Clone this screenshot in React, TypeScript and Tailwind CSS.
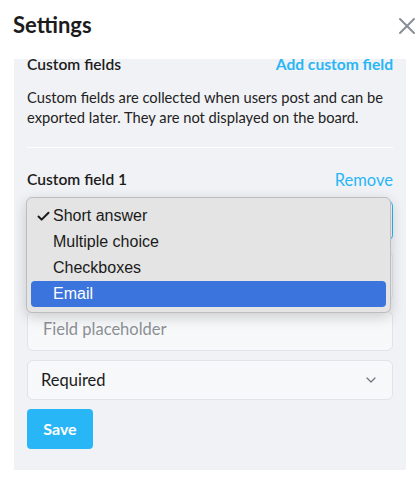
import { Check, ChevronDown, X } from 'lucide-react'

const options = ['Short answer', 'Multiple choice', 'Checkboxes', 'Email']

export default function App() {
  const selected = 'Short answer'
  const highlighted = 'Email'

  return (
    <div className="w-[420px] h-[481px] bg-white font-['Lato',sans-serif] text-[#1c1c1c]">
      {/* Header */}
      <div className="flex justify-between items-start pl-[13px] pt-[11px] h-[59px]">
        <h1 className="text-[22px] leading-[28px] font-bold">Settings</h1>
        <button className="mt-[1px] mr-[-1px] text-[#8a8f97]">
          <X size={28} strokeWidth={1.7} />
        </button>
      </div>

      {/* Scrolled panel */}
      <div className="mx-[14px] h-[411px] bg-[#f1f2f6] overflow-hidden px-[13px]">
        <div className="flex justify-between items-center mt-[-4px] h-[20px] text-[15.6px]">
          <span className="font-semibold">Custom fields</span>
          <button className="font-bold text-[#29b6f6]">Add custom field</button>
        </div>
        <p className="mt-[12px] text-[14.7px] leading-[20px] text-[#222]">
          Custom fields are collected when users post and can be exported later. They are not
          displayed on the board.
        </p>
        <div className="mt-[20px] h-px bg-white" />

        <div className="flex justify-between items-center mt-[22px] h-[20px] text-[15.6px]">
          <span className="font-semibold">Custom field 1</span>
          <button className="text-[16.5px] text-[#29b6f6]">Remove</button>
        </div>

        <div className="relative mt-[10px] flex flex-col gap-[10px]">
          <div className="h-[41px] rounded-[6px] border border-[#29b6f6] bg-[#f7f8fa] px-[14px] flex items-center text-[16.5px]">
            Short answer
          </div>
          <div className="h-[50px] rounded-[6px] border border-[#e1e3e8] bg-[#f7f8fa]" />
          <div className="h-[40px] rounded-[6px] border border-[#e1e3e8] bg-[#f7f8fa] px-[15px] pb-[3px] flex items-center text-[16.5px] text-[#8c8f94]">
            Field placeholder
          </div>
          <div className="-mt-px h-[40px] rounded-[6px] border border-[#e1e3e8] bg-[#f7f8fa] pl-[13px] pr-[13px] flex items-center justify-between text-[16.5px]">
            <span>Required</span>
            <ChevronDown size={16} strokeWidth={1.8} className="text-[#6e737a]" />
          </div>
          <button className="-mt-px w-[66px] h-[40px] rounded-[4px] bg-[#29b6f6] text-white font-bold text-[16px]">
            Save
          </button>

          {/* Native select popup */}
          <div className="absolute left-[-1px] top-[-3px] w-[365px] py-[5px] rounded-[6px] border border-[#bdbdbd] bg-[#e3e4e3] shadow-[0_4px_14px_rgba(0,0,0,0.18)] font-['Liberation_Sans',Arial,sans-serif] text-[16px]">
            {options.map((opt) => (
              <div
                key={opt}
                className={`relative mx-[4px] h-[26px] rounded-[4px] pl-[22px] flex items-center ${
                  opt === highlighted ? 'bg-[#3b74dc] text-white' : 'text-[#1a1a1a]'
                }`}
              >
                {opt === selected && (
                  <Check size={15} strokeWidth={3.2} className="absolute left-[5px] top-[6px]" />
                )}
                {opt}
              </div>
            ))}
          </div>
        </div>
      </div>
    </div>
  )
}
